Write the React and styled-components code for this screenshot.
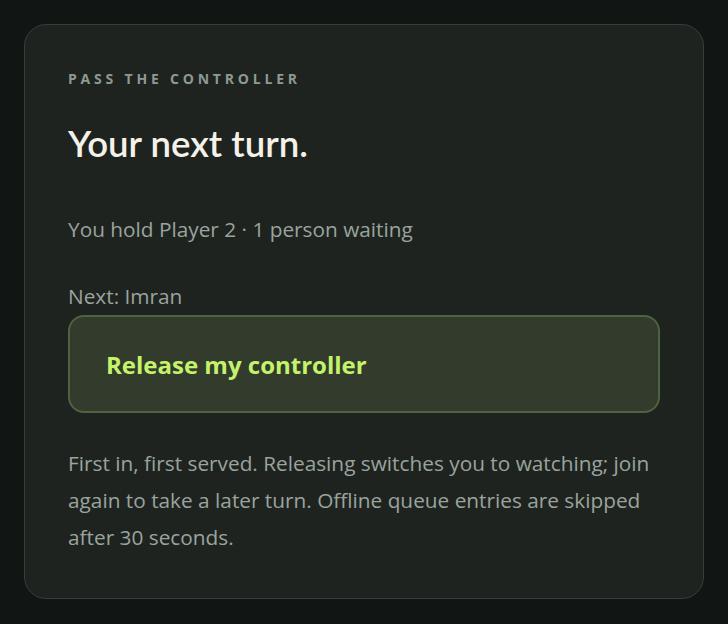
import React from "react";
import styled, { createGlobalStyle } from "styled-components";

const GlobalStyle = createGlobalStyle`
  html, body {
    margin: 0;
    background: #111514;
  }
  body {
    font-family: "Open Sans", "Noto Sans", sans-serif;
  }
`;

const App = () => {
  return (
    <>
      <GlobalStyle />
      <S.Page>
        <S.Card>
          <S.Eyebrow>Pass the controller</S.Eyebrow>
          <S.Title>Your next turn.</S.Title>
          <S.Status>You hold Player 2 · 1 person waiting</S.Status>
          <S.Next>Next: Imran</S.Next>
          <S.ReleaseBtn type="button">Release my controller</S.ReleaseBtn>
          <S.Note>
            First in, first served. Releasing switches you to watching; join
            again to take a later turn. Offline queue entries are skipped
            after 30 seconds.
          </S.Note>
        </S.Card>
      </S.Page>
    </>
  );
};

export default App;

const S = {
  Page: styled.div`
    padding: 24px;
    min-height: 624px;
    box-sizing: border-box;
  `,
  Card: styled.section`
    display: flex;
    flex-direction: column;
    background: #1e2320;
    border: 1px solid #363e38;
    border-radius: 22px;
    padding: 43px 43px 42px;
  `,
  Eyebrow: styled.div`
    font-size: 14px;
    line-height: 22px;
    font-weight: 700;
    letter-spacing: 3.8px;
    text-transform: uppercase;
    color: #8d9a93;
  `,
  Title: styled.h1`
    margin: 31px 0 0;
    font-family: Lato, "Open Sans", sans-serif;
    font-size: 36.6px;
    line-height: 44px;
    font-weight: 600;
    color: #f4f1e8;
  `,
  Status: styled.p`
    margin: 49px 0 0;
    font-size: 20.8px;
    line-height: 30px;
    color: #9aa49d;
  `,
  Next: styled.p`
    margin: 37px 0 0;
    font-size: 20.8px;
    line-height: 30px;
    color: #9aa49d;
  `,
  ReleaseBtn: styled.button`
    margin-top: 4px;
    height: 98px;
    padding: 0 36px;
    text-align: left;
    background: #323b2c;
    border: 2px solid #4e6340;
    border-radius: 16px;
    font-family: inherit;
    font-size: 24px;
    font-weight: 700;
    color: #c4f36b;
    cursor: pointer;
  `,
  Note: styled.p`
    margin: 32px 0 0;
    font-size: 20.8px;
    line-height: 37px;
    color: #9aa49d;
  `,
};
